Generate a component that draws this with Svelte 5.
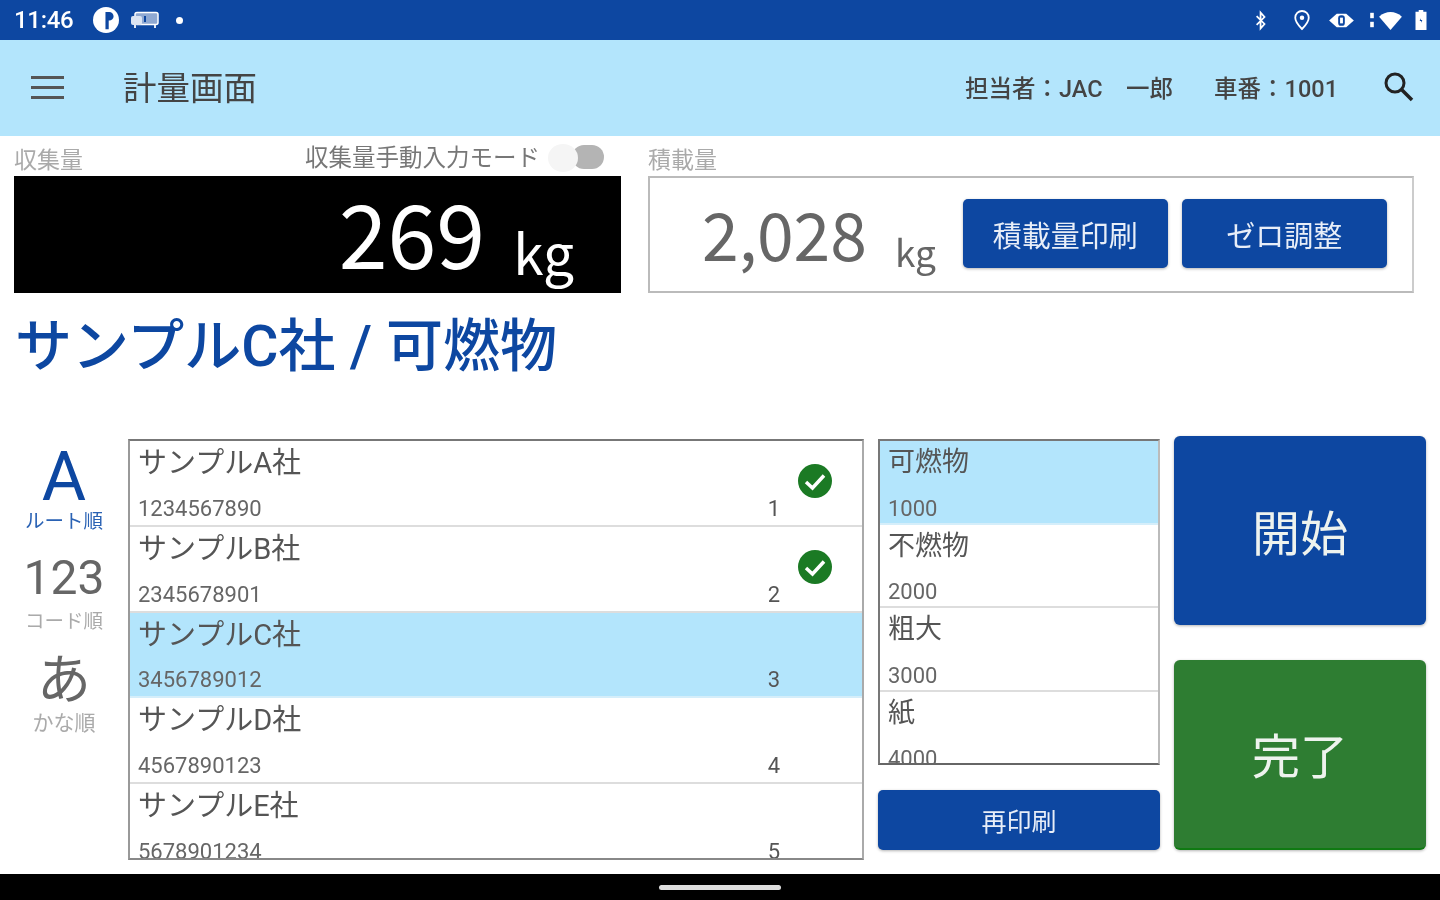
<script>
  const companies = [
    { name: 'サンプルA社', code: '1234567890', no: 1, done: true },
    { name: 'サンプルB社', code: '2345678901', no: 2, done: true },
    { name: 'サンプルC社', code: '3456789012', no: 3, selected: true },
    { name: 'サンプルD社', code: '4567890123', no: 4 },
    { name: 'サンプルE社', code: '5678901234', no: 5 }
  ];
  const categories = [
    { name: '可燃物', code: '1000', selected: true },
    { name: '不燃物', code: '2000' },
    { name: '粗大', code: '3000' },
    { name: '紙', code: '4000' }
  ];
  const sorts = [
    { big: 'A', small: 'ルート順', active: true, cls: 'a' },
    { big: '123', small: 'コード順', cls: 'n' },
    { big: 'あ', small: 'かな順', cls: 'k' }
  ];
</script>

<div class="screen">
  <header class="status">
    <div class="status-left">
      <span class="time">11:46</span>
      <svg class="ic-p" viewBox="0 0 24 24" width="26" height="26"><circle cx="12" cy="12" r="12" fill="#fff"/><path d="M11.500 4.500h3.500a4 4 0 0 1 0 8h-.5v8h-3z" fill="#0d47a1"/></svg>
      <svg class="ic-tv" viewBox="0 0 30 20" width="30" height="20"><rect x="5" y="2.500" width="23" height="12" rx="2" fill="#8fa9d2" stroke="#fff" stroke-width="1.500"/><rect x="1" y="6" width="11" height="9" rx="2" fill="#dbe4f2"/><rect x="14" y="6" width="2" height="6" fill="#0d47a1"/><path d="M5 15v3M25 15v3" stroke="#dfe7f4" stroke-width="2"/></svg>
      <span class="dot"></span>
    </div>
    <div class="status-right">
      <svg class="bt" viewBox="0 0 16 24" width="14" height="21"><path d="M3 7l9 9-4.500 5V3L12 8l-9 9" fill="none" stroke="#fff" stroke-width="2"/></svg>
      <svg class="loc" viewBox="0 0 20 24" width="18" height="22"><path d="M10 2a7.500 7.500 0 0 0-7.500 7.500C2.500 14.500 10 22 10 22s7.500-7.500 7.500-12.500A7.500 7.500 0 0 0 10 2z" fill="none" stroke="#fff" stroke-width="2"/><circle cx="10" cy="9.500" r="2.500" fill="#fff"/></svg>
      <svg class="eye" viewBox="0 0 28 20" width="27" height="19"><path d="M1 10l8-7h10l8 7-8 7H9z" fill="#fff"/><rect x="10.500" y="4.500" width="7" height="11" rx="3" fill="#0d47a1"/><rect x="12.500" y="7" width="3" height="6" fill="#fff"/></svg>
      <span class="wifi">
        <svg viewBox="0 0 6 20" width="6" height="18"><rect x="1" y="2" width="4" height="6" fill="#fff"/><rect x="1" y="12" width="4" height="6" fill="#fff"/></svg>
        <svg viewBox="0 0 26 20" width="25" height="19"><path d="M1 6c7-6.500 17-6.500 24 0L13 20z" fill="#fff"/></svg>
      </span>
      <svg viewBox="0 0 14 24" width="14" height="22"><path d="M4.500 1h5v2H13v20H1V3h3.500z" fill="#fff"/><path d="M7 10l-1.500 3H7v2l1.500-3H7z" fill="#0d47a1"/></svg>
    </div>
  </header>

  <div class="toolbar">
    <div class="burger"><i></i><i></i><i></i></div>
    <h1>計量画面</h1>
    <span class="info staff">担当者：JAC　一郎</span>
    <span class="info car">車番：1001</span>
    <svg class="search" viewBox="0 0 32 32" width="32" height="32"><circle cx="13" cy="12" r="9" fill="none" stroke="#222" stroke-width="3"/><path d="M20 19l10 10" stroke="#222" stroke-width="3.500"/></svg>
  </div>

  <main>
    <section class="top">
      <div class="collect">
        <div class="labels">
          <span class="lab">収集量</span>
          <span class="manual">収集量手動入力モード
            <span class="toggle"><span class="knob"></span></span>
          </span>
        </div>
        <div class="display">
          <span class="v">269</span><span class="u">kg</span>
        </div>
      </div>
      <div class="load">
        <div class="labels"><span class="lab">積載量</span></div>
        <div class="load-box">
          <span class="v">2,028</span><span class="u">kg</span>
          <button class="btn b1">積載量印刷</button>
          <button class="btn b2">ゼロ調整</button>
        </div>
      </div>
    </section>

    <h2>サンプルC社 / 可燃物</h2>

    <section class="bottom">
      <nav class="sorts">
        {#each sorts as s}
          <div class="sort {s.cls}" class:active={s.active}>
            <span class="big">{s.big}</span>
            <span class="small">{s.small}</span>
          </div>
        {/each}
      </nav>

      <div class="list companies">
        {#each companies as c}
          <div class="row" class:sel={c.selected}>
            <span class="name">{c.name}</span>
            <span class="code">{c.code}</span>
            <span class="no">{c.no}</span>
            {#if c.done}
              <svg class="check" viewBox="0 0 34 34" width="34" height="34"><circle cx="17" cy="17" r="17" fill="#1b7a24"/><path d="M8 18l6.500 6L26 11.500" fill="none" stroke="#fff" stroke-width="3.500"/></svg>
            {/if}
          </div>
        {/each}
      </div>

      <div class="cat-col">
        <div class="list cats">
          {#each categories as c}
            <div class="row" class:sel={c.selected}>
              <span class="name">{c.name}</span>
              <span class="code">{c.code}</span>
            </div>
          {/each}
        </div>
        <button class="btn reprint">再印刷</button>
      </div>

      <div class="actions">
        <button class="act start">開始</button>
        <button class="act finish">完了</button>
      </div>
    </section>
  </main>

  <footer class="navbar"><span class="pill"></span></footer>
</div>

<style>
  :global(body) { margin: 0; background: #fff; }
  .screen {
    width: 1440px; height: 900px; overflow: hidden; display: flex; flex-direction: column;
    font-family: Roboto, "Noto Sans CJK JP", sans-serif; background: #fff; color: #333;
    filter: blur(0.7px);
  }
  .status {
    height: 40px; background: #0d47a1; display: flex; justify-content: space-between; align-items: center;
    padding: 0 12px 0 14px; box-sizing: border-box; color: #fff; flex: none;
  }
  .status-left { display: flex; align-items: center; }
  .time { font: 500 24px/1 Roboto, sans-serif; letter-spacing: -0.3px; width: 79px; }
  .ic-tv { margin-left: 11px; }
  .dot { width: 7px; height: 7px; border-radius: 50%; background: #fff; margin-left: 16px; }
  .status-right { display: flex; align-items: center; gap: 20px; }
  .status-right .loc { margin-left: 5px; margin-right: -3px; }
  .wifi { display: flex; align-items: center; gap: 3px; margin-right: -9px; margin-left: -6px; }
  .toolbar {
    height: 96px; background: #b3e5fc; display: flex; align-items: center; flex: none;
    padding: 0 26px 0 31px; box-sizing: border-box;
  }
  .burger { width: 33px; display: flex; flex-direction: column; gap: 7px; margin-top: -2px; }
  .burger i { height: 3px; background: #555; display: block; }
  h1 { font-size: 33.500px; font-weight: 400; margin: 2px 0 0 59px; color: #444; flex: 1; line-height: 1; }
  .info { font-size: 23.500px; font-weight: 500; color: #444; line-height: 1; margin-top: 4px; }
  .staff { margin-right: 41px; }
  .car { margin-right: 44px; }
  .search { flex: none; margin-top: -2px; }
  main { flex: 1; padding: 0 14px; min-height: 0; }
  .top { display: flex; gap: 27px; padding-top: 10px; }
  .collect { width: 607px; flex: none; }
  .load { width: 766px; flex: none; }
  .labels { height: 30px; box-sizing: border-box; padding-bottom: 1px; display: flex; justify-content: space-between; align-items: flex-end; }
  .lab { font-size: 23px; color: #aaa; line-height: 28px; }
  .manual { font-size: 23.500px; color: #777; display: flex; align-items: center; line-height: 28px; margin-bottom: 3px; margin-right: 17px; }
  .toggle { display: block; width: 56px; height: 26px; position: relative; margin-left: 8px; }
  .toggle::after { content: ""; position: absolute; right: 0; top: 0; width: 32px; height: 24px; border-radius: 12px; background: #b4b4b4; }
  .knob { position: absolute; left: 0; top: -1px; width: 30px; height: 28px; border-radius: 50%; background: #f5f5f5; z-index: 1; }
  .display { height: 117px; background: #000; color: #fff; font-family: "Noto Sans CJK JP", sans-serif; display: flex; justify-content: flex-end; align-items: flex-start; padding-right: 47px; box-sizing: border-box; line-height: 1; }
  .display .v { font-size: 88px; line-height: 1; margin-top: 11px; }
  .display .u { font-size: 55px; line-height: 1; margin-left: 28px; margin-top: 48px; }
  .load-box {
    height: 117px; box-sizing: border-box; border: 2px solid #bbb; display: flex; align-items: center;
    padding-left: 52px; color: #666; border-right-color: #ccc; font-family: "Noto Sans CJK JP", sans-serif;
  }
  .load-box .v { font-size: 66px; line-height: 1; margin-top: -6px; }
  .load-box .u { font-size: 37px; line-height: 1; margin: 34px 27px 0 28px; }
  .btn {
    background: #0d47a1; color: #e8eef8; border: 0; border-radius: 5px; font-family: inherit; padding: 0;
    box-shadow: 0 1px 3px rgba(0, 0, 0, 0.3);
  }
  .b1, .b2 { width: 205px; height: 69px; font-size: 29px; margin-top: -2px; }
  .b2 { margin-left: 14px; }
  h2 { font-size: 57px; font-weight: 500; color: #0d47a1; margin: 20px 0 0 1px; line-height: 68px; height: 68px; white-space: pre; }
  .bottom { display: flex; margin-top: 55px; }
  .sorts { width: 100px; flex: none; margin-right: 14px; display: flex; flex-direction: column; align-items: center; color: #666; padding-top: 7px; }
  .sort { display: flex; flex-direction: column; align-items: center; }
  .sort .big { line-height: 1; }
  .small { font-size: 19.500px; line-height: 24px; white-space: nowrap; }
  .a .big { font-size: 68px; color: #0d47a1; height: 67px; }
  .a .small { color: #2a62b4; }
  .n { margin-top: 20px; }
  .n .big { font-size: 48px; height: 50px; }
  .n .small { color: #aaa; margin-top: 6px; }
  .k { margin-top: 15px; }
  .k .big { font-size: 54px; height: 54px; font-family: "Noto Sans CJK JP", sans-serif; }
  .k .small { color: #aaa; margin-top: 8px; font-size: 21px; }
  .list { box-sizing: border-box; border: 2px solid #aaa; border-top-color: #777; overflow: hidden; }
  .companies { width: 736px; height: 421px; margin-top: 3px; border-bottom-color: #888; border-left-color: #999; }
  .row { box-sizing: border-box; height: 85.800px; border-bottom: 2px solid #ddd; position: relative; display: flex; flex-direction: column; justify-content: space-between; padding: 4px 8px 2px; flex: none; }
  .row.sel { background: #b3e5fc; border-bottom-color: #d5eefa; }
  .name { font-size: 29px; line-height: 36px; color: #555; }
  .code { font-size: 22px; line-height: 28px; color: #666; }
  .no { position: absolute; right: 82px; bottom: 2px; font-size: 22px; line-height: 28px; color: #555; }
  .check { position: absolute; right: 30px; top: 23px; }
  .cat-col { width: 282px; flex: none; margin-left: 14px; margin-top: 3px; display: flex; flex-direction: column; }
  .cats { height: 326px; border-left-color: #777; border-bottom-color: #666; border-right-color: #bbb; }
  .cats .row { height: 83.600px; padding: 3px 8px 0; }
  .cats .name { font-size: 27px; }
  .reprint { height: 60px; font-size: 25px; margin-top: 25px; }
  .actions { width: 252px; flex: none; margin-left: 14px; display: flex; flex-direction: column; gap: 35px; }
  .act { border: 0; border-radius: 6px; color: #eef3ee; font-family: inherit; font-size: 48px; padding: 0 0 2px; box-shadow: 0 1px 3px rgba(0, 0, 0, 0.3); }
  .start { height: 189px; background: #0d47a1; }
  .finish { height: 190px; background: #2e7d32; border-bottom: 2px solid #0f7a12; }
  .navbar { height: 26px; background: #000; display: flex; justify-content: center; flex: none; }
  .pill { width: 122px; height: 5px; border-radius: 3px; background: #ddd; margin-top: 11px; }
</style>
